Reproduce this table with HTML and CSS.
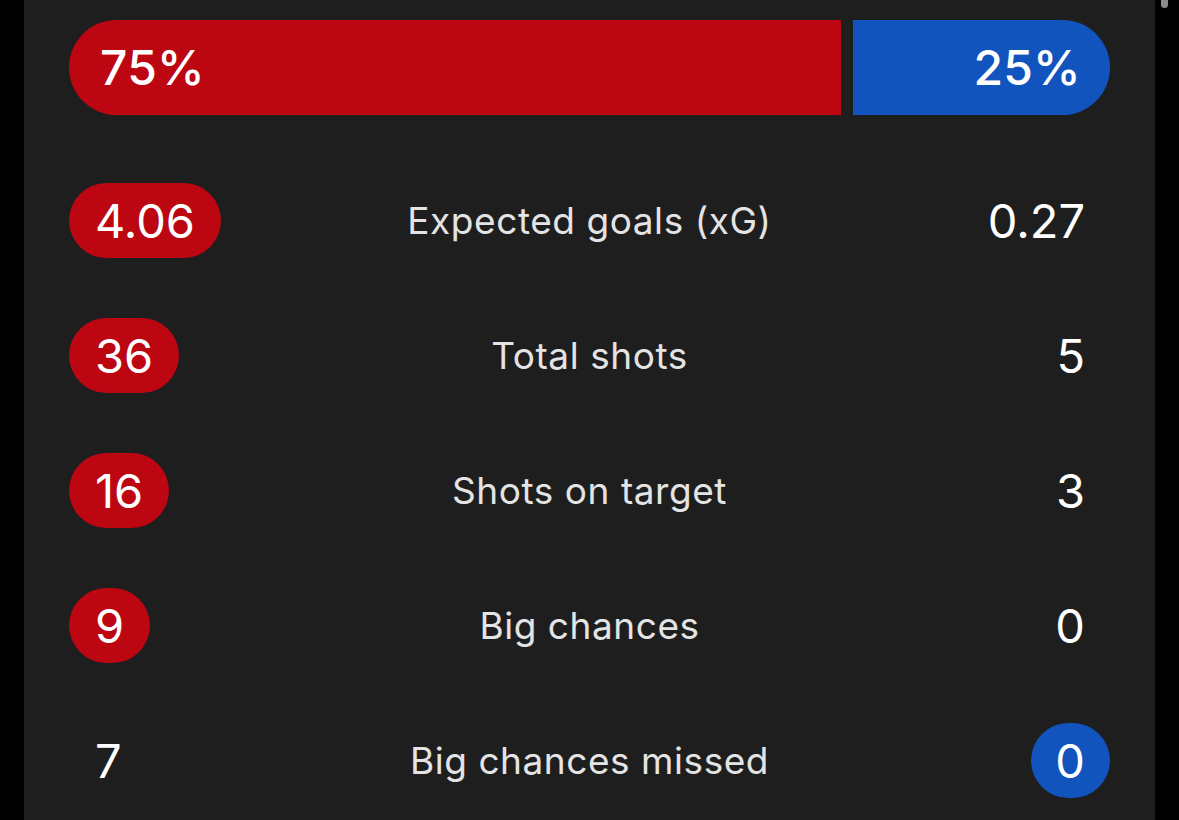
FILE: index.html
```html
<!DOCTYPE html>
<html lang="en">
<head>
<meta charset="utf-8">
<title>Match stats</title>
<link rel="stylesheet" href="styles.css">
</head>
<body>
<div class="page">
  <main class="card">
    <div class="possession" style="grid-template-columns: 75fr 25fr">
      <div class="poss home">75%</div>
      <div class="poss away">25%</div>
    </div>
    <div class="stats">
      <div class="row">
        <span class="val left win-home">4.06</span>
        <span class="label">Expected goals (xG)</span>
        <span class="val right">0.27</span>
      </div>
      <div class="row">
        <span class="val left win-home">36</span>
        <span class="label">Total shots</span>
        <span class="val right">5</span>
      </div>
      <div class="row">
        <span class="val left win-home">16</span>
        <span class="label">Shots on target</span>
        <span class="val right">3</span>
      </div>
      <div class="row">
        <span class="val left win-home">9</span>
        <span class="label">Big chances</span>
        <span class="val right">0</span>
      </div>
      <div class="row">
        <span class="val left">7</span>
        <span class="label">Big chances missed</span>
        <span class="val right win-away">0</span>
      </div>
    </div>
  </main>
  <div class="scroll-thumb"></div>
</div>
</body>
</html>
```

FILE: styles.css
```css
* { box-sizing: border-box; }
html, body {
  margin: 0;
  padding: 0;
  background: #000;
  height: 100%;
  overflow: hidden;
}
body {
  font-family: Inter, "Noto Sans", "Liberation Sans", sans-serif;
  color: #fff;
}
.page {
  position: relative;
  padding: 0 24px;
  height: 820px;
}
.card {
  background: #1e1e1e;
  height: 100%;
  padding: 20px 45px 0;
}
.possession {
  display: grid;
  column-gap: 12px;
  height: 95px;
}
.poss {
  display: flex;
  align-items: center;
  min-width: 0;
  font-size: 48px;
  font-weight: 500;
  color: #fff;
  letter-spacing: 0.2px;
}
.poss.home {
  background: #bc0611;
  border-radius: 48px 0 0 48px;
  padding-left: 31px;
}
.poss.away {
  background: #1254bd;
  border-radius: 0 48px 48px 0;
  justify-content: flex-end;
  padding-right: 29px;
}
.stats {
  margin-top: 38px;
}
.row {
  display: grid;
  grid-template-columns: 1fr auto 1fr;
  align-items: center;
  height: 135px;
}
.val {
  height: 75px;
  line-height: 75px;
  font-size: 47px;
  font-weight: 400;
  padding: 0 26px;
  border-radius: 38px;
  color: #fff;
}
.val.left { justify-self: start; }
.val.left.win-home:last-child { padding-right: 26px; }
.val.right { justify-self: end; padding-right: 25px; }
.win-home { background: #bc0611; }
.win-away { background: #1254bd; padding-left: 24px; }
.label {
  font-size: 37px;
  color: #e4e4e4;
  text-align: center;
  letter-spacing: 0.55px;
}
.scroll-thumb {
  position: absolute;
  top: -4px;
  left: 1161px;
  width: 7px;
  height: 12px;
  border-radius: 4px;
  background: #8a8a8a;
}
```
